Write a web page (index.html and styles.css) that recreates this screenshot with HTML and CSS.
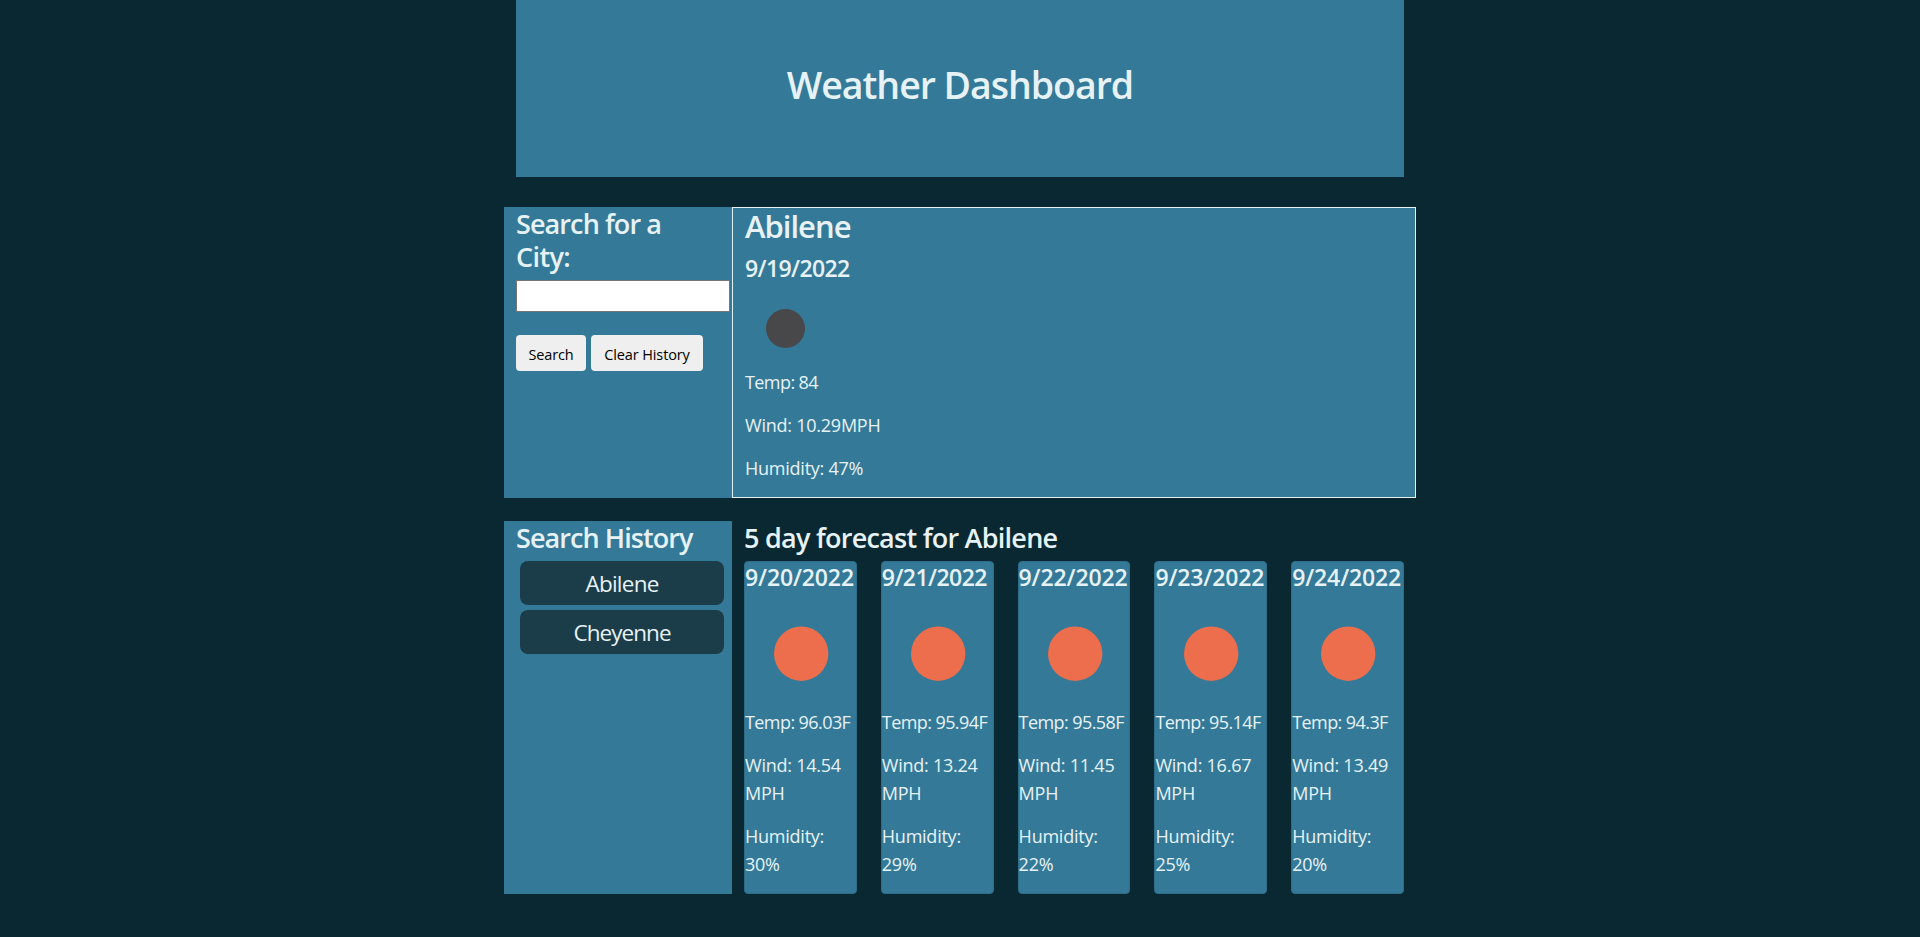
FILE: index.html
```
<!DOCTYPE html>
<html lang="en">
<head>
<meta charset="utf-8">
<title>Weather Dashboard</title>
<link rel="stylesheet" href="styles.css">
</head>
<body>
<div class="container">
  <header class="header"><h1 class="title">Weather Dashboard</h1></header>
  <div class="row top-row">
    <section class="side">
      <h3 class="heading"><span>Search for a</span><br><span class="city-word">City:</span></h3>
      <input class="city-input" type="text" aria-label="City">
      <div class="actions">
        <button class="btn">Search</button>
        <button class="btn btn-clear">Clear History</button>
      </div>
    </section>
    <section class="current">
      <h2 class="city">Abilene</h2>
      <h4 class="date">9/19/2022</h4>
      <svg class="icon-small" viewBox="0 0 80 80"><circle cx="40.5" cy="40.5" r="19.5" fill="#48484a"/></svg>
      <p class="temp">Temp: 84</p>
      <p>Wind: 10.29MPH</p>
      <p>Humidity: 47%</p>
    </section>
  </div>
  <div class="row bottom-row">
    <section class="side">
      <h3 class="heading history-heading">Search History</h3>
      <div class="history">
        <button class="history-btn">Abilene</button>
        <button class="history-btn cheyenne">Cheyenne</button>
      </div>
    </section>
    <section class="forecast">
      <h3 class="heading forecast-heading">5 day forecast for Abilene</h3>
      <div class="cards">
        <article class="card">
          <h4 class="date">9/20/2022</h4>
          <svg class="icon" viewBox="0 0 111 110"><circle cx="56.2" cy="55.7" r="27.2" fill="#ec6e4c"/></svg>
          <p class="temp">Temp: 96.03F</p><p>Wind: 14.54 MPH</p><p>Humidity: 30%</p>
        </article>
        <article class="card">
          <h4 class="date narrow">9/21/2022</h4>
          <svg class="icon" viewBox="0 0 111 110"><circle cx="56.2" cy="55.7" r="27.2" fill="#ec6e4c"/></svg>
          <p class="temp">Temp: 95.94F</p><p>Wind: 13.24 MPH</p><p>Humidity: 29%</p>
        </article>
        <article class="card">
          <h4 class="date">9/22/2022</h4>
          <svg class="icon" viewBox="0 0 111 110"><circle cx="56.2" cy="55.7" r="27.2" fill="#ec6e4c"/></svg>
          <p class="temp">Temp: 95.58F</p><p>Wind: 11.45 MPH</p><p>Humidity: 22%</p>
        </article>
        <article class="card">
          <h4 class="date">9/23/2022</h4>
          <svg class="icon" viewBox="0 0 111 110"><circle cx="56.2" cy="55.7" r="27.2" fill="#ec6e4c"/></svg>
          <p class="temp">Temp: 95.14F</p><p>Wind: 16.67 MPH</p><p>Humidity: 25%</p>
        </article>
        <article class="card">
          <h4 class="date">9/24/2022</h4>
          <svg class="icon" viewBox="0 0 111 110"><circle cx="56.2" cy="55.7" r="27.2" fill="#ec6e4c"/></svg>
          <p class="temp">Temp: 94.3F</p><p>Wind: 13.49 MPH</p><p>Humidity: 20%</p>
        </article>
      </div>
    </section>
  </div>
</div>
</body>
</html>
```
FILE: styles.css
```
* { box-sizing: border-box; }
body {
  margin: 0;
  background: #092832;
  color: #e7f2f6;
  font: 18px/27px "Open Sans", "Noto Sans", sans-serif;
}
h1, h2, h3, h4 { margin: 0; font-weight: 600; }
p { margin: 0 0 16px; letter-spacing: -0.24px; }
p:last-child { margin-bottom: 0; }
.temp { letter-spacing: -0.58px; }
.container { width: 912px; margin: 0 auto; }
.header {
  height: 177px;
  margin: 0 12px 30px;
  padding-top: 61px;
  background: #347a98;
  text-align: center;
}
.title { font-size: 37.5px; line-height: 48px; letter-spacing: -1.03px; }
.row { display: grid; grid-template-columns: 228px 684px; }
.top-row { height: 291px; margin-bottom: 23px; }
.bottom-row { height: 373px; }
.side { padding-left: 12px; background: #347a98; }
.heading { font-size: 27px; line-height: 33.3px; letter-spacing: -0.9px; }
.city-word { letter-spacing: -0.6px; }
.city-input {
  display: block;
  width: 214px;
  height: 32px;
  margin: 6px 0 23px;
  border: 1px solid #767676;
  background: #fff;
}
.actions { display: flex; gap: 5px; }
.btn {
  width: 70px;
  height: 36px;
  padding: 5px 0 0;
  border: 0;
  border-radius: 4px;
  background: #efefef;
  color: #000;
  font: 14.5px/20px "Open Sans", sans-serif;
  letter-spacing: -0.12px;
}
.btn-clear { width: 112px; }
.current { padding-left: 12px; border: 1px solid #e7f2f6; background: #347a98; }
.city { margin-bottom: 8px; font-size: 31px; line-height: 37px; letter-spacing: -1px; }
.date { font-size: 23px; line-height: 30px; letter-spacing: -0.12px; }
.current .date { letter-spacing: -0.6px; }
.card .narrow { letter-spacing: -0.55px; }
.icon-small { display: block; width: 80px; height: 80px; margin: 5px 0 1px; }
.history { display: grid; gap: 5px; padding: 7px 0 0 4px; }
.history-heading { letter-spacing: -0.93px; }
.history-btn {
  width: 204px;
  height: 44px;
  padding: 2px 0 0;
  border: 0;
  border-radius: 8px;
  background: #1b3d4a;
  color: #e7f2f6;
  font: 22.5px/30px "Open Sans", sans-serif;
  letter-spacing: -0.75px;
}
.cheyenne { letter-spacing: -0.95px; }
.forecast { display: flex; flex-direction: column; padding: 0 12px; }
.forecast-heading { letter-spacing: -0.74px; }
.cards { display: grid; flex: 1; grid-template-columns: repeat(5, 112.8px); gap: 24px; margin-top: 7px; }
.card {
  border: 1px solid #2e6d88;
  border-radius: 4px;
  background: #347a98;
  line-height: 28px;
}
.card .icon { display: block; width: 111px; height: 110px; margin: 6px 0 0; }
.card p { margin-bottom: 15px; }
.card p:last-child { margin-bottom: 0; }
```
